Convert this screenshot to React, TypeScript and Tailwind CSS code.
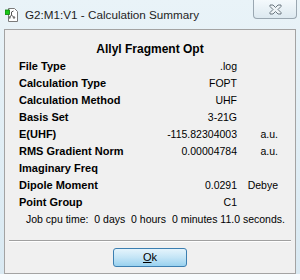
const rows: { label: string; value?: string; unit?: string }[] = [
  { label: "File Type", value: ".log" },
  { label: "Calculation Type", value: "FOPT" },
  { label: "Calculation Method", value: "UHF" },
  { label: "Basis Set", value: "3-21G" },
  { label: "E(UHF)", value: "-115.82304003", unit: "a.u." },
  { label: "RMS Gradient Norm", value: "0.00004784", unit: "a.u." },
  { label: "Imaginary Freq" },
  { label: "Dipole Moment", value: "0.0291", unit: "Debye" },
  { label: "Point Group", value: "C1" },
];

function AppIcon() {
  return (
    <svg width="14" height="14" viewBox="0 0 14 14">
      <path d="M3.5 0.5h6l3 3v10h-9z" fill="#fff" stroke="#7a7a7a" />
      <path d="M6.5 4v3l-2 2.5M6.5 7l2.5 2.5M6.5 4l2 -1" stroke="#555" fill="none" />
      <circle cx="4.5" cy="9.5" r="1.2" fill="#777" />
      <circle cx="9" cy="9.5" r="1.2" fill="#777" />
      <rect x="0" y="2" width="4.5" height="4.5" fill="#18c818" stroke="#0b7a0b" strokeWidth="0.8" />
    </svg>
  );
}

function CloseGlyph() {
  return (
    <svg width="13" height="11" viewBox="0 0 13 11">
      <path
        d="M1 1h3l2.5 2.5L9 1h3v1.5L9 5.5l3 3V10H9L6.5 7.5 4 10H1V8.5l3-3-3-3z"
        fill="#eef3f6"
        stroke="#6b7780"
        strokeWidth="1"
        strokeLinejoin="round"
      />
    </svg>
  );
}

export default function App() {
  return (
    <div
      className="w-[300px] h-[280px] overflow-hidden bg-gradient-to-b from-[#e9f3f8] to-[#d9e9f2] flex flex-col text-black"
      style={{ fontFamily: '"Liberation Sans", Arial, sans-serif' }}
    >
      {/* title bar */}
      <div className="h-[29px] flex items-start relative">
        <div className="mt-[8px] ml-[5px]">
          <AppIcon />
        </div>
        <span className="ml-[6px] mt-[7px] text-[11.7px] leading-[15px] text-[#1e1e1e]">
          G2:M1:V1 - Calculation Summary
        </span>
        <div className="ml-auto mr-[3px] w-[44px] h-[19px] rounded-b-[4px] border border-t-0 border-[#9aa7b1] bg-gradient-to-b from-[#f4f9fc] to-[#dde9f0] flex items-center justify-center">
          <CloseGlyph />
        </div>
      </div>

      {/* client area */}
      <div className="mx-[4px] h-[245px] border border-[#a3a3a3] bg-[#f0f0f0] flex flex-col">
        <div className="pt-[11px] text-center text-[12px] leading-[17px] font-bold">
          Allyl Fragment Opt
        </div>
        <div className="pl-[14px]">
          {rows.map((r) => (
            <div
              key={r.label}
              className="grid grid-cols-[128px_90px_41px] h-[17px] items-center text-[10.5px] leading-[17px]"
            >
              <span className="font-bold text-[11px]">{r.label}</span>
              <span className="text-right">{r.value}</span>
              <span className="text-right">{r.unit}</span>
            </div>
          ))}
        </div>
        <div className="pl-[21px] h-[17px] text-[10.5px] leading-[17px] whitespace-pre">
          {"Job cpu time:  0 days  0 hours  0 minutes 11.0 seconds."}
        </div>
        <div className="mt-[12px] mx-[4px] border-t border-[#a0a0a0] border-b-white border-b" />
        <div className="mt-[6px] flex justify-center">
          <button className="w-[74px] h-[19px] rounded-[3px] border border-[#3c7fb1] bg-gradient-to-b from-[#e5f4fc] via-[#c4e5f6] to-[#98d1ef] text-[11px] leading-[17px]">
            <span className="underline">O</span>k
          </button>
        </div>
      </div>
      <div className="flex-1 bg-[#f7fbfd]" />
    </div>
  );
}
